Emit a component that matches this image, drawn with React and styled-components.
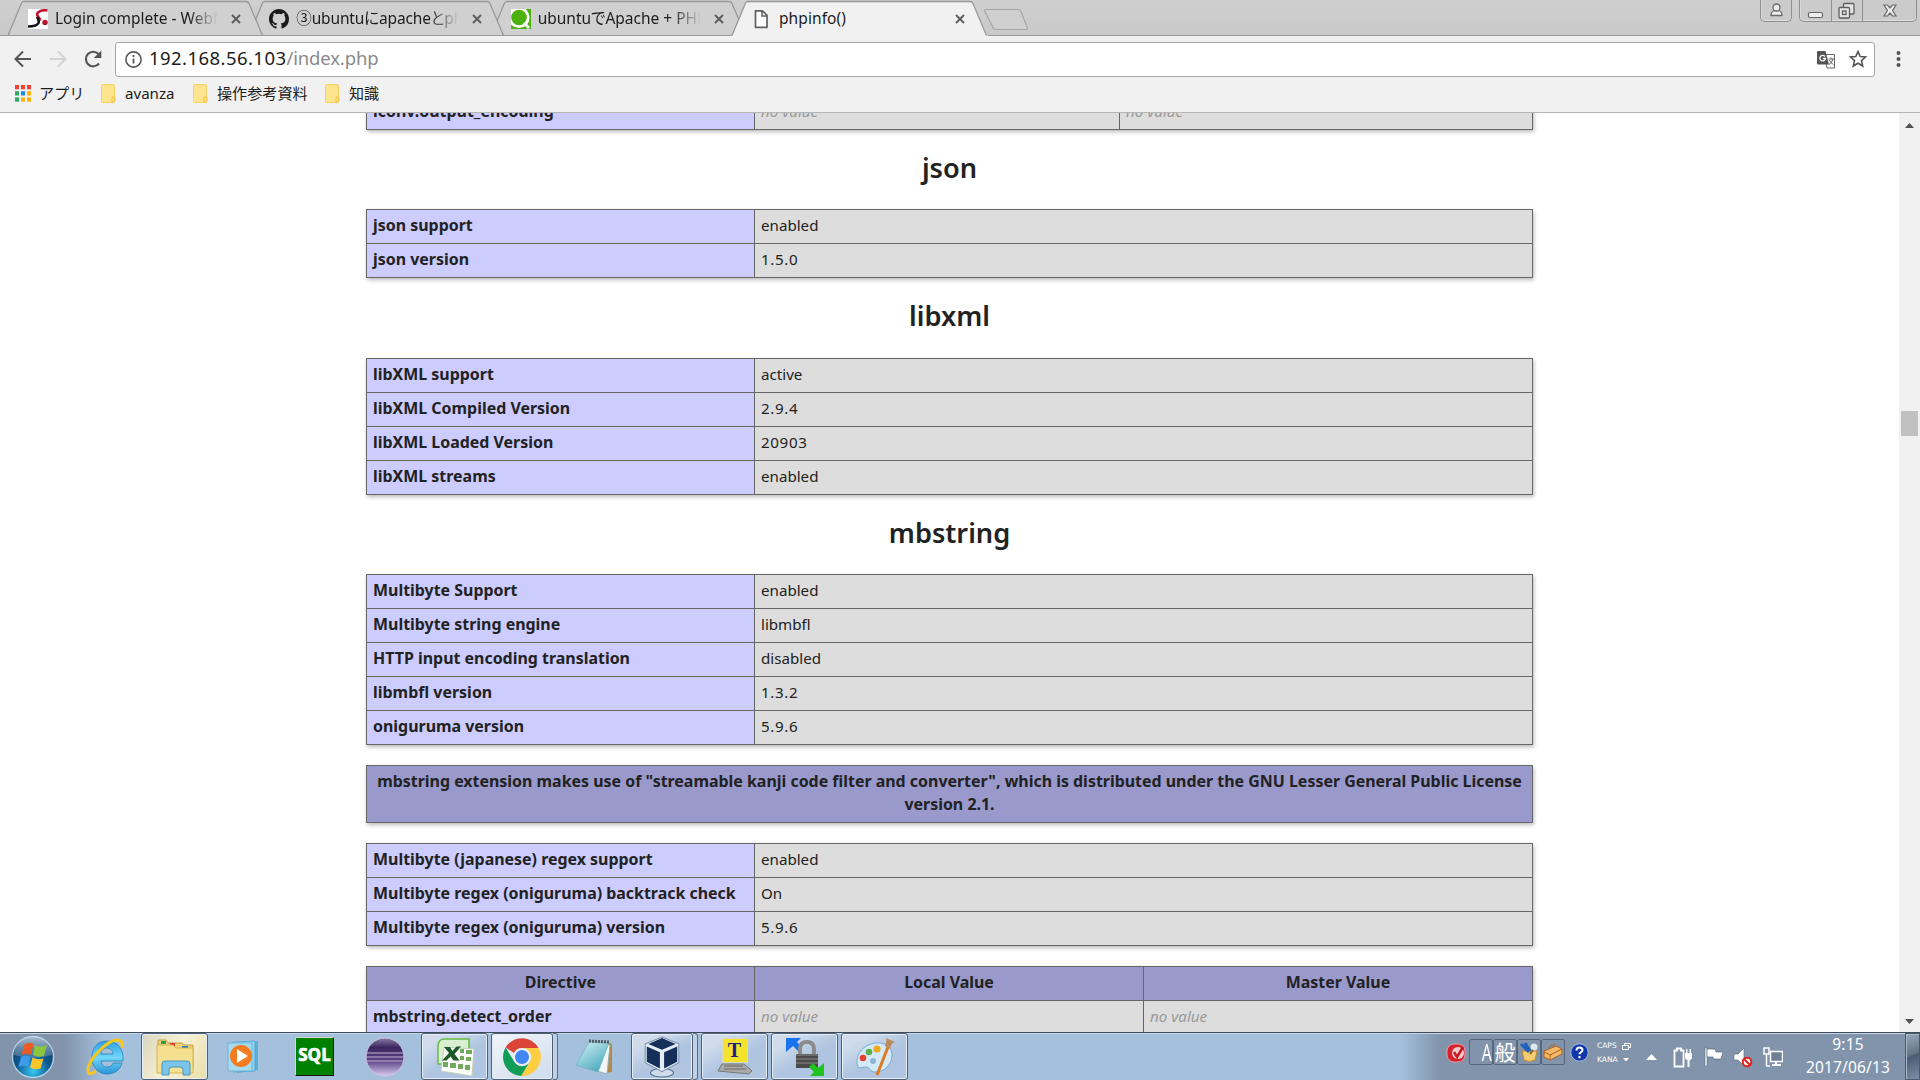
import React from "react";
import styled, { createGlobalStyle, css } from "styled-components";

const Global = createGlobalStyle`
  * { box-sizing: border-box; }
  html, body { margin: 0; padding: 0; background: #fff; overflow: hidden; }
  body { font-family: "Noto Sans", "Noto Sans CJK JP", sans-serif; }
  svg { display: block; flex: none; }
`;

const Screen = styled.div`
  width: 1920px;
  height: 1080px;
  display: flex;
  flex-direction: column;
  overflow: hidden;
`;

/* ---------- tab strip ---------- */
const TabStrip = styled.header`
  height: 36px;
  flex: none;
  display: flex;
  padding-left: 7px;
  background: linear-gradient(#cfcfcf, #c9c9c9);
  box-shadow: inset 0 -1px 0 #999;
  isolation: isolate;
`;
const TabBox = styled.div`
  position: relative;
  z-index: ${(p) => p.$z};
  width: 257px;
  height: 36px;
  flex: none;
  margin-right: -15.7px;
  display: grid;
  align-items: center;
  > * { grid-area: 1 / 1; }
`;
const TabRow = styled.div`
  display: flex;
  align-items: center;
  height: 36px;
  padding: 2px 0 0 21px;
`;
const Favicon = styled.span`
  width: 20px;
  height: 20px;
  flex: none;
`;
const TabTitle = styled.span`
  width: 163px;
  margin: -3px 12px 0 7px;
  white-space: nowrap;
  overflow: hidden;
  font-size: 15.5px;
  line-height: 24px;
  letter-spacing: ${(p) => p.$ls || 0}px;
  font-feature-settings: "palt";
  color: #1c1c1c;
  ${(p) => !p.$active && css`
    mask-image: linear-gradient(90deg, #000 133px, transparent 163px);
  `}
`;
const WindowButtons = styled.div`
  display: flex;
  margin-left: auto;
  padding-right: 3px;
  height: 22px;
  gap: 7px;
`;
const ButtonGroup = styled.div`
  display: flex;
  height: 22px;
  border: 1px solid #8f8f8f;
  border-top: 0;
  border-radius: 0 0 5px 5px;
  background: #cbcbcb;
  box-shadow: inset 0 -1px 0 #dedede, inset 1px 0 0 #dadada;
`;
const WinButton = styled.span`
  width: ${(p) => p.$w}px;
  display: flex;
  align-items: center;
  justify-content: center;
  & + & { border-left: 1px solid #8f8f8f; }
`;

/* ---------- toolbar ---------- */
const Toolbar = styled.div`
  height: 44px;
  flex: none;
  display: flex;
  align-items: center;
  padding: 2px 0 0 13px;
  background: #f1f1f1;
  gap: 15px;
`;
const UrlBox = styled.div`
  width: 1760px;
  height: 35px;
  margin-left: -3px;
  display: flex;
  align-items: center;
  border: 1px solid #a6a6a6;
  border-radius: 3px;
  background: #fff;
  padding: 0 6px 0 8px;
  flex: none;
`;
const Url = styled.span`
  flex: 1;
  margin-left: 6px;
  margin-top: -2px;
  font-size: 18.5px;
  line-height: 26px;
  letter-spacing: 0.44px;
  color: #1c1c1c;
`;
const UrlPath = styled.span`
  color: #8a8a8a;
  letter-spacing: -0.15px;
`;
const Bookmarks = styled.nav`
  height: 33px;
  flex: none;
  display: flex;
  align-items: center;
  padding: 0 0 6px 15px;
  border-bottom: 1px solid #b6b6b6;
  background: #f1f1f1;
`;
const BookmarkText = styled.span`
  width: ${(p) => p.$w}px;
  margin: -1px ${(p) => p.$gap}px 0 ${(p) => p.$ml || 9}px;
  font-size: 15.1px;
  line-height: 22px;
  white-space: nowrap;
  color: #1c1c1c;
`;

/* ---------- page ---------- */
const Viewport = styled.div`
  flex: 1;
  min-height: 0;
  display: flex;
  overflow: hidden;
`;
const Page = styled.main`
  flex: 1;
  min-width: 0;
  overflow: hidden;
  padding-left: 366px;
  color: #222;
`;
const Heading = styled.h2`
  width: 1167px;
  height: ${(p) => p.$h || 79}px;
  margin: 0;
  padding-bottom: 4px;
  display: flex;
  align-items: center;
  justify-content: center;
  font-size: 27.2px;
  font-weight: 600;
  line-height: 36px;
`;
const InfoTable = styled.section`
  width: 1167px;
  margin-top: ${(p) => p.$mt || 0}px;
  border: solid #666;
  border-width: 1px 0 0 1px;
  box-shadow: 1px 2px 4px #bbb;
  font-size: 15.15px;
  line-height: 23px;
`;
const Row = styled.div`
  display: grid;
  grid-template-columns: ${(p) => p.$cols};
`;
const Cell = styled.div`
  min-height: 34px;
  padding: 4px 6px 6px;
  border: solid #666;
  border-width: 0 1px 1px 0;
  background: #ddd;
  white-space: nowrap;
  ${(p) => p.$numeric && css`letter-spacing: 0.65px;`}
`;
const KeyCell = styled(Cell)`
  background: #ccf;
  font-size: 15.95px;
  font-weight: 700;
`;
const HeadCell = styled(Cell)`
  background: #99c;
  font-size: 15.95px;
  font-weight: 700;
  text-align: center;
`;
const NoValue = styled.i`
  color: #999;
`;
const Scrollbar = styled.aside`
  width: 21px;
  flex: none;
  display: flex;
  flex-direction: column;
  align-items: center;
  background: #f1f1f1;
  padding: 10px 0 8px;
`;
const Thumb = styled.div`
  width: 17px;
  height: 25px;
  margin: 283px 0 auto;
  background: #c1c1c1;
`;

/* ---------- taskbar ---------- */
const Taskbar = styled.footer`
  height: 48px;
  flex: none;
  display: flex;
  border-top: 1px solid #3f4c5c;
  box-shadow: inset 0 1px 0 #c5d6e8;
  background: linear-gradient(90deg, #8194ab 0, #8194ab 64px, #a5c0dd 105px, #a5c0dd 1400px, #8194ab 1440px);
`;
const TaskSlot = styled.div`
  width: ${(p) => (p.$start ? 71 : 70)}px;
  height: 47px;
  flex: none;
  display: flex;
  align-items: center;
  padding-left: ${(p) => (p.$start ? 11 : 0)}px;
`;
const TaskButton = styled.div`
  width: ${(p) => (p.$stack ? 62 : 67)}px;
  height: 47px;
  display: flex;
  align-items: center;
  justify-content: center;
  border: 1px solid #4f6076;
  border-radius: 3px;
  box-shadow: inset 0 0 0 1px #e6eef7;
  background: ${(p) =>
    p.$tone === "gold"
      ? "linear-gradient(120deg,#d9d5bd,#f6f1d4 50%,#e9dfa9)"
      : p.$tone === "bright"
      ? "linear-gradient(150deg,#f0f4f9,#cfdcec)"
      : "linear-gradient(150deg,#d0dcec 20%,#aec4e0 55%,#b0c5e0)"};
`;
const StackEdge = styled.div`
  width: 5px;
  height: 47px;
  border: solid #5b6d84;
  border-width: 1px 1px 1px 0;
  border-radius: 0 3px 3px 0;
  background: #c0d1e6;
`;
const Plain = styled.div`
  width: 67px;
  display: flex;
  justify-content: center;
`;
const SqlTile = styled.div`
  width: 39px;
  height: 39px;
  display: flex;
  align-items: center;
  justify-content: center;
  background: #008000;
  border: 1px solid #d0d6cc;
  border-right-color: #111;
  border-bottom-color: #111;
  color: #fff;
  font: 700 17px/20px "Open Sans", sans-serif;
  -webkit-text-stroke: 0.7px #fff;
  padding-bottom: 3px;
`;
const Tray = styled.div`
  display: flex;
  align-items: center;
  margin-left: auto;
  color: #fff;
`;
const ImeBox = styled.span`
  width: 24px;
  height: 26px;
  margin-top: -9px;
  display: flex;
  align-items: center;
  justify-content: ${(p) => (p.$end ? "flex-end" : "center")};
  border: 1px solid #56677c;
  border-radius: 2px;
  font-size: ${(p) => (p.$end ? 24 : 21)}px;
  line-height: 24px;
`;
const Narrow = styled.span`
  transform: scaleX(0.65);
  transform-origin: right;
  padding-right: 1px;
`;
const CapsKana = styled.span`
  width: 38px;
  margin: -7px 12px 0 8px;
  display: grid;
  grid-template-columns: 25px 12px;
  row-gap: 4px;
  align-items: center;
  font: 7.5px/10px "DejaVu Sans", sans-serif;
`;
const TrayIcon = styled.span`
  margin-left: ${(p) => p.$ml || 0}px;
  margin-top: ${(p) => p.$mt || 0}px;
`;
const Clock = styled.div`
  width: 100px;
  margin: -1px 7px 0 15px;
  text-align: center;
  font-size: 15.5px;
  letter-spacing: 0.15px;
  line-height: 23px;
  white-space: nowrap;
`;
const ShowDesktop = styled.div`
  width: 15px;
  height: 47px;
  border: 1px solid #4b5a6c;
  box-shadow: inset 1px 1px 0 #a9b6c6;
  background: linear-gradient(160deg, #9aa9bb, #64758a 45%, #4c5d72 50%, #7b8ea6);
`;

/* ---------- small drawings ---------- */
const Close = () => (
  <svg width="12" height="12" viewBox="0 0 12 12"><path d="M2 2l8 8M10 2l-8 8" stroke="#5a5a5a" strokeWidth="1.8" /></svg>
);
const RedLogo = () => (
  <svg width="20" height="20" viewBox="0 0 20 20">
    <rect width="20" height="20" fill="#fff" />
    <path d="M19.500 1.500C13 .5 8 3 9.500 6.500c.8 2 3 3 2.500 5" stroke="#c8102e" strokeWidth="2.600" fill="none" />
    <path d="M0 17.500c5 0 9-.5 10.500-3.500 1-2.500-.5-4-1.500-6" stroke="#111" strokeWidth="2.600" fill="none" />
    <circle cx="17" cy="13.500" r="2.700" fill="#b8142c" />
  </svg>
);
const Octocat = () => (
  <svg width="20" height="20" viewBox="0 0 16 16" fill="#1b1b1b">
    <path d="M8 0C3.58 0 0 3.58 0 8c0 3.54 2.29 6.53 5.47 7.59.4.07.55-.17.55-.38 0-.19-.01-.82-.01-1.49-2.01.37-2.53-.49-2.69-.94-.09-.23-.48-.94-.82-1.13-.28-.15-.68-.52-.01-.53.63-.01 1.08.58 1.23.82.72 1.21 1.87.87 2.33.66.07-.52.28-.87.51-1.07-1.78-.2-3.64-.89-3.64-3.95 0-.87.31-1.59.82-2.15-.08-.2-.36-1.02.08-2.12 0 0 .67-.21 2.2.82a7.6 7.6 0 0 1 4 0c1.53-1.04 2.2-.82 2.2-.82.44 1.1.16 1.92.08 2.12.51.56.82 1.27.82 2.15 0 3.07-1.87 3.75-3.65 3.95.29.25.54.73.54 1.48 0 1.07-.01 1.93-.01 2.2 0 .21.15.46.55.38A8 8 0 0 0 16 8c0-4.42-3.58-8-8-8z" />
  </svg>
);
const Qiita = () => (
  <svg width="20" height="20" viewBox="0 0 20 20">
    <rect width="20" height="20" fill="#4cb10d" />
    <circle cx="8" cy="8.500" r="9.200" fill="#4cb10d" stroke="#fff" strokeWidth="2.800" />
    <path d="M13 14l5 5" stroke="#fff" strokeWidth="3" />
    <path d="M0 0h2L0 2z" fill="#fff" />
  </svg>
);
const BlankDoc = () => (
  <svg width="20" height="20" viewBox="0 0 20 20">
    <path d="M3.500 1.800h7l4.500 4.500v12H3.500z" fill="#fff" stroke="#5f5f5f" strokeWidth="1.700" strokeLinejoin="round" />
    <path d="M10 2v5h5" fill="none" stroke="#5f5f5f" strokeWidth="1.500" />
  </svg>
);
const Folder = () => (
  <svg width="15" height="19" viewBox="0 0 15 19">
    <path d="M.5 1.500q0-1 1-1h11q1 0 1 1v16q0 1-1 1h-11q-1 0-1-1z" fill="#ffe48f" stroke="#f8d264" />
    <path d="M11 18.500q3 0 3-1.500v-4h-3z" fill="#ffdc70" stroke="#efbf46" strokeWidth=".8" />
  </svg>
);
const Apps = () => (
  <svg width="16" height="17" viewBox="0 0 16 17">
    {["#f44336", "#f44336", "#f44336", "#2fa866", "#1e88e5", "#ffb300", "#2fa866", "#ffb300", "#ffb300"].map((c, i) => (
      <rect key={i} x={(i % 3) * 6} y={Math.floor(i / 3) * 6.2} width="4" height="4.300" fill={c} />
    ))}
  </svg>
);
const tabFill = (active) => (active ? "#f1f1f1" : "#d0d0d0");

function Tab({ icon, title, active, z, ls }) {
  return (
    <TabBox $z={z}>
      <svg width="257" height="36" viewBox="0 0 257 36">
        <path d={active ? "M0 36L1 35.500C3 33 13 6 14.500 3Q15.500 1.500 17 1.500H239Q241 1.500 242 3.500L255 34L257 36z" : "M1 35.500L14.500 3Q15.500 1.500 17 1.500H239Q241 1.500 242 3.500L255 34.500V35.500z"} fill={tabFill(active)} />
        <path d="M1 35.500L14.500 3Q15.500 1.500 17 1.500H239Q241 1.500 242 3.500L255.500 35.500" fill="none" stroke="#999" strokeWidth="1.300" />
        {!active && <path d="M0 35.500H257" stroke="#999" />}
      </svg>
      <TabRow>
        <Favicon>{icon}</Favicon>
        <TabTitle $active={active} $ls={ls}>{title}</TabTitle>
        <Close />
      </TabRow>
    </TabBox>
  );
}

const two = "388px 778px";
const three = "388px 389px 389px";
const threeWide = "388px 365px 413px";

function PairTable({ rows, mt }) {
  return (
    <InfoTable $mt={mt}>
      {rows.map(([k, v]) => (
        <Row key={k} $cols={two}>
          <KeyCell>{k}</KeyCell>
          <Cell $numeric={/^[\d.]+$/.test(v)}>{v}</Cell>
        </Row>
      ))}
    </InfoTable>
  );
}

/* taskbar icons */
const Orb = () => (
  <svg width="44" height="44" viewBox="0 0 44 44">
    <defs>
      <radialGradient id="orb" cx=".5" cy=".85" r=".8"><stop offset="0" stopColor="#35c9f2" /><stop offset=".5" stopColor="#0e5a92" /><stop offset="1" stopColor="#12395f" /></radialGradient>
      <linearGradient id="orbTop" x2="0" y2="1"><stop offset="0" stopColor="#c9d9e6" stopOpacity=".85" /><stop offset="1" stopColor="#7f9db6" stopOpacity=".4" /></linearGradient>
    </defs>
    <circle cx="22" cy="22" r="20.500" fill="url(#orb)" stroke="#b6d3e4" strokeWidth="1.300" />
    <path d="M3 20A19 19 0 0 1 41 20Q22 26 3 20z" fill="url(#orbTop)" />
    <path d="M13 10q5-4 9.500-1l-2.500 11q-4-3-9.500 0z" fill="#ee5a24" />
    <path d="M24 10q5 3 12 0l-3 11q-6 2-11-1z" fill="#8cc63f" />
    <path d="M10 22q5-3 9.500 0l-2.500 10q-4-3-9.500 0z" fill="#3d9be9" />
    <path d="M21.500 22.500q5 3 11 1l-3 10q-6 2-10.500-1z" fill="#fcc52c" />
  </svg>
);
const IE = () => (
  <svg width="40" height="40" viewBox="0 0 40 40">
    <defs><linearGradient id="ie" x2="0" y2="1"><stop offset="0" stopColor="#2b9fe0" /><stop offset=".5" stopColor="#72d7f8" /><stop offset="1" stopColor="#2b94d6" /></linearGradient></defs>
    <path d="M22 4C12 4 7 11 7 20c0 10 6 17 15 17 8 0 13-4 15-11h-9c-1 3-3 4-6 4-4 0-6-3-6-6h22C39 12 33 4 22 4zm-6 13c0-4 3-6 6-6s6 2 6 6z" fill="url(#ie)" stroke="#2382bd" strokeWidth=".8" fillRule="evenodd" />
    <path d="M37 11c1-4 0-8-5-8C22 3 2 24 3 34c0 4 4 3 8 0" fill="none" stroke="#f5c61d" strokeWidth="3" />
  </svg>
);
const Explorer = () => (
  <svg width="42" height="40" viewBox="0 0 42 40">
    <path d="M4 3h8l2 3h14l2 2h9v24H4z" fill="#eed27a" stroke="#c79f3a" />
    <path d="M7 4h5v3H7z" fill="#2f9d4c" /><path d="M16 6h5v3h-5z" fill="#d63c2c" /><path d="M28 9h6v3h-6z" fill="#2f7bc4" />
    <path d="M3 8h16l3 3h17v25H3z" fill="#f6e08f" stroke="#d7b453" />
    <path d="M8 38V27q0-3 3-3h22q3 0 3 3v11h-7v-5q0-3-3-3h-8q-3 0-3 3v5z" fill="#7cc5ea" stroke="#4595c4" />
  </svg>
);
const WMP = () => (
  <svg width="36" height="36" viewBox="0 0 36 36">
    <path d="M10 3l21-1v29l-21 3z" fill="#5bb0da" /><path d="M6 3l22-1v30l-22 1z" fill="#8fd1ee" stroke="#4c9fc9" strokeWidth=".7" />
    <path d="M1 4h24v28H1z" fill="#a7d9ef" stroke="#62aacd" strokeWidth=".7" />
    <circle cx="14" cy="17" r="11" fill="#f47b20" /><path d="M10 10l11 7-11 7z" fill="#fff" />
  </svg>
);
const Eclipse = () => (
  <svg width="40" height="40" viewBox="0 0 40 40">
    <defs><linearGradient id="ec" x2="0" y2="1"><stop offset="0" stopColor="#8b7ba8" /><stop offset=".25" stopColor="#3a2660" /><stop offset=".6" stopColor="#5b4585" /><stop offset="1" stopColor="#d9caf0" /></linearGradient></defs>
    <circle cx="20" cy="20" r="19" fill="url(#ec)" stroke="#d0c3df" />
    <path d="M1 16h38M0 20h40M1 24h38" stroke="#c2b4d8" strokeWidth="1.200" />
  </svg>
);
const Excel = () => (
  <svg width="40" height="40" viewBox="0 0 40 40">
    <path d="M9 2h25v25H3V8q1-6 6-6z" fill="#d8efd0" stroke="#65ba46" strokeWidth="1.500" />
    <path d="M9 10l30 2-2 27-31-5z" fill="#fdfefb" stroke="#c3d2bb" />
    <path d="M25 12h4v4h-4zM31 13h6v4h-6zM31 20h5v4h-5zM25 19h4v4h-4zM8 25h5v5H8zM15 26h6v5h-6zM23 27h5v5h-5zM30 28h5v5h-5z" fill="#71aa5d" />
    <path d="M9 10h6l2.500 4 4-4.500h4.500l-6.500 7.500 5 6.500h-6l-3-4-4 4H7l7-7.500z" fill="#1c5a28" />
  </svg>
);
const Chrome = () => (
  <svg width="38" height="38" viewBox="0 0 38 38">
    <path d="M2.600 9.500A19 19 0 0 1 35.500 10H19a9 9 0 0 0-8 5z" fill="#db4437" />
    <path d="M35.500 10A19 19 0 0 1 18 38l9-14.500A9 9 0 0 0 19 10z" fill="#ffcd40" />
    <path d="M18 38A19 19 0 0 1 2.600 9.500l8.600 14A9 9 0 0 0 26 25z" fill="#0f9d58" />
    <circle cx="19" cy="19" r="8.800" fill="#f1f1f1" /><circle cx="19" cy="19" r="7" fill="#4285f4" />
  </svg>
);
const Notepad = () => (
  <svg width="40" height="40" viewBox="0 0 40 40">
    <defs><linearGradient id="np" x2=".7" y2="1"><stop offset="0" stopColor="#d7f2f6" /><stop offset="1" stopColor="#4aa9bd" /></linearGradient></defs>
    <path d="M33 5l4 2v28l-6 1z" fill="#b08a4c" /><path d="M31 7L22 34l10 3 3-29z" fill="#f2f6f6" stroke="#9caeb2" />
    <path d="M14 5l20 1-11 29L1 28z" fill="url(#np)" stroke="#5da9b7" strokeWidth=".6" />
    <path d="M14 4l20 1" stroke="#505c60" strokeWidth="3" strokeDasharray="2 1" />
  </svg>
);
const VBox = () => (
  <svg width="38" height="42" viewBox="0 0 36 40">
    <ellipse cx="18" cy="35" rx="11" ry="4" fill="#cfdbe8" stroke="#5b7595" />
    <path d="M18 1l16 6.500v18L18 34 2 25.500v-18z" fill="#e4edf5" stroke="#7b92ad" />
    <path d="M18 2l13 5.500L18 13 5 7.500zM3.500 10l12.500 5.500V31L3.500 24.500zM32.500 10L20 15.500V31l12.500-6.500z" fill="#14305a" />
  </svg>
);
const TeraBox = styled.div`
  display: flex;
  flex-direction: column;
  align-items: center;
`;
const TeraScreen = styled.div`
  width: 26px;
  height: 25px;
  border: 1px solid #d9d9c0;
  background: #f4e32c;
  color: #1c1c8c;
  font: 700 20px/23px "Liberation Serif", serif;
  text-align: center;
`;
const WinScp = () => (
  <svg width="40" height="40" viewBox="0 0 40 40">
    <path d="M1 1h15l-4 4 5 5-4 4-5-5-7 6z" fill="#1873ee" />
    <path d="M15 17v-5q0-7 7-7t7 7v5" fill="none" stroke="#8b8b8b" strokeWidth="4" />
    <path d="M11 17h22v14H11z" fill="#4a4a4a" /><path d="M11 18h22M11 22h22M11 26h22" stroke="#8a8a8a" />
    <path d="M39 39H25l4-4-5-5 4-4 5 5 6-5z" fill="#1fc21f" />
  </svg>
);
const Paint = () => (
  <svg width="40" height="40" viewBox="0 0 40 40">
    <path d="M20 6C8 8 1 17 2 27c1 6 5 3 9 3 4 0 4 5 9 5 10 0 17-8 17-17 0-8-7-13-17-12z" fill="#d3e9f8" stroke="#79aed0" />
    <circle cx="8" cy="21" r="3.300" fill="#e2442f" /><circle cx="14" cy="15" r="3.300" fill="#58b14b" /><circle cx="22" cy="12" r="3.600" fill="#f5a81c" /><circle cx="18" cy="24" r="3" fill="#8fb4d3" />
    <path d="M33 10L22 38" stroke="#dd7a25" strokeWidth="3" /><path d="M30 9q2-6 1-8l9 4q-4 1-5 7z" fill="#b98d60" />
  </svg>
);

const tasks = [
  { plain: true, el: <IE /> },
  { tone: "gold", el: <Explorer /> },
  { plain: true, el: <WMP /> },
  { plain: true, el: <SqlTile>SQL</SqlTile> },
  { plain: true, el: <Eclipse /> },
  { el: <Excel /> },
  { tone: "bright", stack: true, el: <Chrome /> },
  { plain: true, el: <Notepad /> },
  { stack: true, el: <VBox /> },
  {
    el: (
      <TeraBox>
        <TeraScreen>T</TeraScreen>
        <svg width="36" height="13" viewBox="0 0 36 13"><path d="M5 1h22l8 7-3 3-31-3z" fill="#aaa" stroke="#777" /><path d="M7 3h19M7 6h22" stroke="#666" /></svg>
      </TeraBox>
    ),
  },
  { el: <WinScp /> },
  { el: <Paint /> },
];

export default function App() {
  return (
    <Screen>
      <Global />
      <TabStrip>
        <Tab z={3} icon={<RedLogo />} title="Login complete - WebM" />
        <Tab z={2} icon={<Octocat />} title="③ubuntuにapacheとphp" ls={-0.15} />
        <Tab z={1} icon={<Qiita />} title="ubuntuでApache + PHP" />
        <Tab z={4} active icon={<BlankDoc />} title="phpinfo()" ls={0.1} />
        <svg width="60" height="36" viewBox="0 0 60 36">
          <path d="M14 9.500H46Q48 9.500 49 11.500L55 27Q56 29.500 54 29.500H24Q22 29.500 21 27.500L13 11.500Q12.500 9.500 14 9.500z" fill="#d0d0d0" stroke="#a6a6a6" strokeWidth="1.200" />
        </svg>
        <WindowButtons>
          <ButtonGroup>
            <WinButton $w={30}>
              <svg width="15" height="15" viewBox="0 0 15 15" fill="#eee" stroke="#6a6a6a" strokeWidth="1.300"><path d="M2 12.500q0-4 3.500-5h4q3.500 1 3.500 5z" /><circle cx="7.500" cy="4.500" r="3.500" /></svg>
            </WinButton>
          </ButtonGroup>
          <ButtonGroup>
            <WinButton $w={31}>
              <svg width="17" height="18" viewBox="0 0 17 18"><rect x="1.500" y="10.500" width="14" height="5" rx="1.500" fill="#eee" stroke="#666" strokeWidth="1.200" /></svg>
            </WinButton>
            <WinButton $w={31}>
              <svg width="18" height="18" viewBox="0 0 18 18" fill="#e6e6e6" stroke="#5e5e5e" strokeWidth="1.300"><rect x="5.500" y="1.500" width="10.500" height="10.500" rx="1" /><rect x="1" y="5.500" width="10.500" height="10.500" rx="1" /><rect x="4.500" y="9" width="3.500" height="3.500" /></svg>
            </WinButton>
            <WinButton $w={54}>
              <svg width="16" height="14" viewBox="0 0 16 14"><path d="M2 1h3.500L8 4l2.500-3H14L10.500 6.500l3.500 5.500h-3.500L8 9l-2.500 3H2L5.500 6.500z" fill="#eee" stroke="#6a6a6a" strokeWidth="1.200" /></svg>
            </WinButton>
          </ButtonGroup>
        </WindowButtons>
      </TabStrip>

      <Toolbar>
        <svg width="20" height="20" viewBox="0 0 20 20" fill="none" stroke="#555" strokeWidth="2"><path d="M18 10H3M10 2.500L2.500 10l7.500 7.500" /></svg>
        <svg width="20" height="20" viewBox="0 0 20 20" fill="none" stroke="#d2d2d2" strokeWidth="2"><path d="M2 10h15M10 2.500l7.500 7.500-7.500 7.500" /></svg>
        <svg width="20" height="20" viewBox="0 0 20 20"><path d="M16 14.500A7.300 7.300 0 1 1 15.500 5L17 7" fill="none" stroke="#555" strokeWidth="2.100" /><path d="M18.300 1.500v7.500h-7.500z" fill="#555" /></svg>
        <UrlBox>
          <svg width="19" height="19" viewBox="0 0 19 19"><circle cx="9.500" cy="9.500" r="7.600" fill="none" stroke="#5a5a5a" strokeWidth="1.600" /><path d="M9.500 8.500v5M9.500 5v2" stroke="#5a5a5a" strokeWidth="1.800" /></svg>
          <Url>192.168.56.103<UrlPath>/index.php</UrlPath></Url>
          <svg width="19" height="19" viewBox="0 0 19 19">
            <path d="M7.500 4.500H17.500V18H10z" fill="#fff" stroke="#666" />
            <path d="M1 1h7.500l3.500 13.500H1q-1 0-1-1V2q0-1 1-1z" fill="#555" />
            <path d="M8 6.500A2.800 2.800 0 1 0 8.500 8.500H6" fill="none" stroke="#fff" strokeWidth="1.300" />
            <path d="M11.500 9h5.500M14 7.500V9M16 9q-1 4-4 5.500M12.500 10q1 3 4 4.500" fill="none" stroke="#666" />
          </svg>
          <svg width="32" height="20" viewBox="-12 0 32 20"><path d="M10 2.500l2.200 5 5.300.5-4 3.600 1.200 5.400L10 14.200 5.300 17l1.200-5.400-4-3.600 5.300-.5z" fill="none" stroke="#555" strokeWidth="1.600" /></svg>
        </UrlBox>
        <svg width="18" height="20" viewBox="0 0 18 20" fill="#555"><circle cx="8.500" cy="4" r="2" /><circle cx="8.500" cy="10" r="2" /><circle cx="8.500" cy="16" r="2" /></svg>
      </Toolbar>
      <Bookmarks>
        <Apps />
        <BookmarkText $w={43} $gap={19} $ml={8}>アプリ</BookmarkText>
        <Folder />
        <BookmarkText $w={51} $gap={17}>avanza</BookmarkText>
        <Folder />
        <BookmarkText $w={91} $gap={17}>操作参考資料</BookmarkText>
        <Folder />
        <BookmarkText $w={40} $gap={0}>知識</BookmarkText>
      </Bookmarks>

      <Viewport>
        <Page>
          <InfoTable $mt={-18}>
            <Row $cols={threeWide}>
              <KeyCell>iconv.output_encoding</KeyCell>
              <Cell><NoValue>no value</NoValue></Cell>
              <Cell><NoValue>no value</NoValue></Cell>
            </Row>
          </InfoTable>
          <Heading>json</Heading>
          <PairTable rows={[["json support", "enabled"], ["json version", "1.5.0"]]} />
          <Heading $h={80}>libxml</Heading>
          <PairTable rows={[["libXML support", "active"], ["libXML Compiled Version", "2.9.4"], ["libXML Loaded Version", "20903"], ["libXML streams", "enabled"]]} />
          <Heading>mbstring</Heading>
          <PairTable rows={[["Multibyte Support", "enabled"], ["Multibyte string engine", "libmbfl"], ["HTTP input encoding translation", "disabled"], ["libmbfl version", "1.3.2"], ["oniguruma version", "5.9.6"]]} />
          <InfoTable $mt={20}>
            <HeadCell>
              mbstring extension makes use of "streamable kanji code filter and converter", which is distributed under the GNU Lesser General Public License
              <br />version 2.1.
            </HeadCell>
          </InfoTable>
          <PairTable mt={20} rows={[["Multibyte (japanese) regex support", "enabled"], ["Multibyte regex (oniguruma) backtrack check", "On"], ["Multibyte regex (oniguruma) version", "5.9.6"]]} />
          <InfoTable $mt={20}>
            <Row $cols={three}>
              <HeadCell>Directive</HeadCell>
              <HeadCell>Local Value</HeadCell>
              <HeadCell>Master Value</HeadCell>
            </Row>
            <Row $cols={three}>
              <KeyCell>mbstring.detect_order</KeyCell>
              <Cell><NoValue>no value</NoValue></Cell>
              <Cell><NoValue>no value</NoValue></Cell>
            </Row>
          </InfoTable>
        </Page>
        <Scrollbar>
          <svg width="9" height="5" viewBox="0 0 9 5"><path d="M0 5L4.500 0 9 5z" fill="#505050" /></svg>
          <Thumb />
          <svg width="9" height="5" viewBox="0 0 9 5"><path d="M0 0l4.500 5L9 0z" fill="#505050" /></svg>
        </Scrollbar>
      </Viewport>

      <Taskbar>
        <TaskSlot $start><Orb /></TaskSlot>
        {tasks.map((t, i) => (
          <TaskSlot key={i}>
            {t.plain ? <Plain>{t.el}</Plain> : <TaskButton $tone={t.tone} $stack={t.stack}>{t.el}</TaskButton>}
            {t.stack && <StackEdge />}
          </TaskSlot>
        ))}
        <Tray>
          <TrayIcon $mt={-8}>
            <svg width="20" height="20" viewBox="0 0 20 20"><rect x="1" y="1" width="18" height="18" rx="7" fill="#d2232e" stroke="#ef9aa0" /><circle cx="12" cy="10" r="6" fill="#f0cdd0" /><path d="M8 9l3 5 6-10" stroke="#c81824" strokeWidth="2.500" fill="none" /></svg>
          </TrayIcon>
          <TrayIcon $ml={3} />
          <ImeBox $end><Narrow>A</Narrow></ImeBox>
          <ImeBox>般</ImeBox>
          <ImeBox>
            <svg width="20" height="22" viewBox="0 0 20 22"><path d="M3 10h15l-2 9q-6 3-11 0z" fill="#f4cd70" stroke="#bd8a2c" /><path d="M2 3l8 8M6 2l5 8" stroke="#1d61bd" strokeWidth="3" /><circle cx="15" cy="6" r="3.500" fill="#dceaf0" /><path d="M14 9l-3 4" stroke="#8c5c2c" strokeWidth="2" /></svg>
          </ImeBox>
          <ImeBox>
            <svg width="20" height="20" viewBox="0 0 20 20"><path d="M1 9l12-5 6 3v5L7 18l-6-3z" fill="#f5b768" stroke="#a9641d" /><path d="M1 10l6 3 12-6M7 13v5M6 6q1-4 6-3" fill="none" stroke="#a9641d" /></svg>
          </ImeBox>
          <TrayIcon $ml={5} $mt={-8}>
            <svg width="19" height="19" viewBox="0 0 19 19"><circle cx="9.500" cy="9.500" r="8.700" fill="#1237a8" stroke="#a9b9e2" /><path d="M6.500 7.500q0-3 3-3t3 2.500q0 1.500-1.700 2.300-1.300.7-1.300 2M9.500 13v2.300" fill="none" stroke="#fff" strokeWidth="2" /></svg>
          </TrayIcon>
          <CapsKana>
            <span>CAPS</span>
            <svg width="9" height="7" viewBox="0 0 9 7" fill="none" stroke="#fff"><path d="M2.500 2V.5h6v4H7M.5 2.500h6v4h-6z" /></svg>
            <span>KANA</span>
            <svg width="7" height="4" viewBox="0 0 7 4"><path d="M1 0h6L4 3.500z" fill="#fff" /></svg>
          </CapsKana>
          <TrayIcon $ml={-1} $mt={1}><svg width="11" height="6" viewBox="0 0 11 6"><path d="M0 6l5.500-6L11 6z" fill="#fff" /></svg></TrayIcon>
          <TrayIcon $ml={16} $mt={1}>
            <svg width="20" height="21" viewBox="0 0 20 21"><path d="M1.500 3.500H4v-2h4v2h2.500v16h-9z" fill="#8292a8" stroke="#fff" strokeWidth="1.800" /><path d="M12 6h7v4q0 3-2.500 3V20h-2v-7Q12 13 12 10zM13 2h1.500v4H13zM16.500 2H18v4h-1.500z" fill="#fff" /></svg>
          </TrayIcon>
          <TrayIcon $ml={11}>
            <svg width="20" height="20" viewBox="0 0 20 20"><path d="M1 1h2v18H1z" fill="#fff" stroke="#4e5d70" strokeWidth=".5" /><path d="M3 2h8l1 3h7l-2 7h-7l-1-2H3z" fill="#fff" stroke="#4e5d70" strokeWidth=".6" /></svg>
          </TrayIcon>
          <TrayIcon $ml={9} $mt={2}>
            <svg width="20" height="21" viewBox="0 0 20 21"><path d="M1 7h4l6-6v18l-6-6H1z" fill="#fff" stroke="#56657a" strokeWidth=".6" /><circle cx="14" cy="15" r="4.300" fill="#fff" stroke="#e0201b" strokeWidth="2" /><path d="M11 12l6 6" stroke="#e0201b" strokeWidth="2" /></svg>
          </TrayIcon>
          <TrayIcon $ml={10} $mt={1}>
            <svg width="20" height="21" viewBox="0 0 20 21"><path d="M7.500 4.500h12v10h-12z" fill="#6f8096" stroke="#fff" strokeWidth="1.500" /><path d="M9 18h9M13 15v3" stroke="#fff" strokeWidth="2" /><path d="M1 1h5v6H1zM3.500 7v12H7" fill="#8292a8" stroke="#fff" strokeWidth="1.500" /></svg>
          </TrayIcon>
          <Clock>9:15<br />2017/06/13</Clock>
          <ShowDesktop />
        </Tray>
      </Taskbar>
    </Screen>
  );
}
